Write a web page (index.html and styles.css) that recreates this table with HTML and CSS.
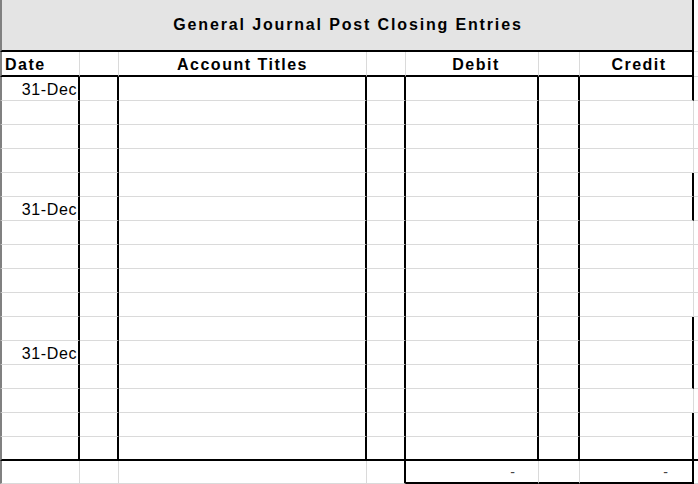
FILE: index.html
```html
<!DOCTYPE html>
<html lang="en">
<head>
<meta charset="utf-8">
<title>General Journal Post Closing Entries</title>
<link rel="stylesheet" href="styles.css">
</head>
<body>
<div class="sheet">
  <div class="title-row">
    <div class="title">General Journal Post Closing Entries</div>
    <div class="pad"></div>
  </div>
  <div class="row head">
    <div class="c c1 hdr-left">Date</div>
    <div class="c c2"></div>
    <div class="c c3 hdr-center">Account Titles</div>
    <div class="c c4"></div>
    <div class="c c5 hdr-center debit-h">Debit</div>
    <div class="c c6"></div>
    <div class="c c7 thick hdr-center credit-h">Credit</div>
    <div class="c pad"></div>
  </div>

  <div class="row body"><div class="c c1 date">31-Dec</div><div class="c c2"></div><div class="c c3"></div><div class="c c4"></div><div class="c c5"></div><div class="c c6"></div><div class="c c7 thick"></div><div class="c pad"></div></div>
  <div class="row body"><div class="c c1"></div><div class="c c2"></div><div class="c c3"></div><div class="c c4"></div><div class="c c5"></div><div class="c c6"></div><div class="c c7"></div><div class="c pad"></div></div>
  <div class="row body"><div class="c c1"></div><div class="c c2"></div><div class="c c3"></div><div class="c c4"></div><div class="c c5"></div><div class="c c6"></div><div class="c c7"></div><div class="c pad"></div></div>
  <div class="row body"><div class="c c1"></div><div class="c c2"></div><div class="c c3"></div><div class="c c4"></div><div class="c c5"></div><div class="c c6"></div><div class="c c7"></div><div class="c pad"></div></div>
  <div class="row body"><div class="c c1"></div><div class="c c2"></div><div class="c c3"></div><div class="c c4"></div><div class="c c5"></div><div class="c c6"></div><div class="c c7 thick"></div><div class="c pad"></div></div>
  <div class="row body"><div class="c c1 date">31-Dec</div><div class="c c2"></div><div class="c c3"></div><div class="c c4"></div><div class="c c5"></div><div class="c c6"></div><div class="c c7 thick"></div><div class="c pad"></div></div>
  <div class="row body"><div class="c c1"></div><div class="c c2"></div><div class="c c3"></div><div class="c c4"></div><div class="c c5"></div><div class="c c6"></div><div class="c c7"></div><div class="c pad"></div></div>
  <div class="row body"><div class="c c1"></div><div class="c c2"></div><div class="c c3"></div><div class="c c4"></div><div class="c c5"></div><div class="c c6"></div><div class="c c7"></div><div class="c pad"></div></div>
  <div class="row body"><div class="c c1"></div><div class="c c2"></div><div class="c c3"></div><div class="c c4"></div><div class="c c5"></div><div class="c c6"></div><div class="c c7"></div><div class="c pad"></div></div>
  <div class="row body"><div class="c c1"></div><div class="c c2"></div><div class="c c3"></div><div class="c c4"></div><div class="c c5"></div><div class="c c6"></div><div class="c c7"></div><div class="c pad"></div></div>
  <div class="row body"><div class="c c1"></div><div class="c c2"></div><div class="c c3"></div><div class="c c4"></div><div class="c c5"></div><div class="c c6"></div><div class="c c7 thick"></div><div class="c pad"></div></div>
  <div class="row body"><div class="c c1 date">31-Dec</div><div class="c c2"></div><div class="c c3"></div><div class="c c4"></div><div class="c c5"></div><div class="c c6"></div><div class="c c7 thick"></div><div class="c pad"></div></div>
  <div class="row body"><div class="c c1"></div><div class="c c2"></div><div class="c c3"></div><div class="c c4"></div><div class="c c5"></div><div class="c c6"></div><div class="c c7 thick"></div><div class="c pad"></div></div>
  <div class="row body"><div class="c c1"></div><div class="c c2"></div><div class="c c3"></div><div class="c c4"></div><div class="c c5"></div><div class="c c6"></div><div class="c c7"></div><div class="c pad"></div></div>
  <div class="row body"><div class="c c1"></div><div class="c c2"></div><div class="c c3"></div><div class="c c4"></div><div class="c c5"></div><div class="c c6"></div><div class="c c7 thick"></div><div class="c pad"></div></div>
  <div class="row body last"><div class="c c1"></div><div class="c c2"></div><div class="c c3"></div><div class="c c4"></div><div class="c c5"></div><div class="c c6"></div><div class="c c7 thick"></div><div class="c pad"></div></div>

  <div class="row total">
    <div class="c c1"></div>
    <div class="c c2"></div>
    <div class="c c3"></div>
    <div class="c c4 edge"></div>
    <div class="c c5 boxed amount debit-amt">-</div>
    <div class="c c6 boxed"></div>
    <div class="c c7 boxed thick amount credit-amt">-</div>
    <div class="c pad"></div>
  </div>
</div>
</body>
</html>
```

FILE: styles.css
```css
* {
  box-sizing: border-box;
}

html, body {
  margin: 0;
  padding: 0;
  background: #ffffff;
}

body {
  font-family: "Liberation Sans", Arial, sans-serif;
  color: #000000;
  width: 698px;
  height: 484px;
  overflow: hidden;
}

.sheet {
  display: flex;
  flex-direction: column;
  width: 698px;
}

.title-row {
  display: grid;
  grid-template-columns: 694px 4px;
  height: 52px;
}

.title {
  background: #e4e4e4;
  border-left: 2px solid #808080;
  border-right: 2px solid #000000;
  border-bottom: 2px solid #000000;
  text-align: center;
  font-weight: bold;
  font-size: 16px;
  letter-spacing: 1.85px;
  line-height: 46px;
  padding-top: 2px;
  padding-left: 2px;
}

.title-row .pad {
  border-bottom: 1px solid #dadada;
}

.row {
  display: grid;
  grid-template-columns: 80px 39px 248px 39px 133px 41px 114px 4px;
  height: 24px;
}

.row.head {
  height: 25px;
}

.row.total {
  height: 23px;
}

.c {
  border-right: 1px solid #dadada;
  border-bottom: 1px solid #dadada;
  overflow: hidden;
  white-space: nowrap;
}

.c.pad {
  border-right: none;
}

.c1 {
  border-left: 2px solid #808080;
}

/* header */
.head .c {
  border-bottom: 2px solid #000000;
  font-weight: bold;
  font-size: 16px;
  letter-spacing: 1.5px;
  line-height: 21px;
  padding-top: 2px;
}

.head .c.pad {
  border-bottom: 1px solid #dadada;
}

.hdr-left {
  text-align: left;
  padding-left: 3px;
}

.hdr-center {
  text-align: center;
}

.debit-h {
  padding-left: 8px;
}

.credit-h {
  padding-left: 6px;
}

.thick {
  border-right: 2px solid #000000;
}

.head .c7.thick {
  border-right: 2px solid #000000;
}

/* body rows */
.body .c1,
.body .c2,
.body .c3,
.body .c4,
.body .c5,
.body .c6 {
  border-right: 2px solid #000000;
}

.body.last .c {
  border-bottom: 2px solid #000000;
}

.date {
  text-align: right;
  font-size: 16px;
  letter-spacing: 0.6px;
  line-height: 20px;
  padding-top: 3px;
  padding-right: 1px;
}

/* total row */
.total .edge {
  border-right: 2px solid #000000;
}

.total .boxed {
  border-bottom: 2px solid #000000;
}

.amount {
  text-align: right;
  font-size: 14px;
  line-height: 22px;
  color: #444444;
}

.debit-amt {
  padding-right: 23px;
}

.credit-amt {
  padding-right: 24px;
}
```
